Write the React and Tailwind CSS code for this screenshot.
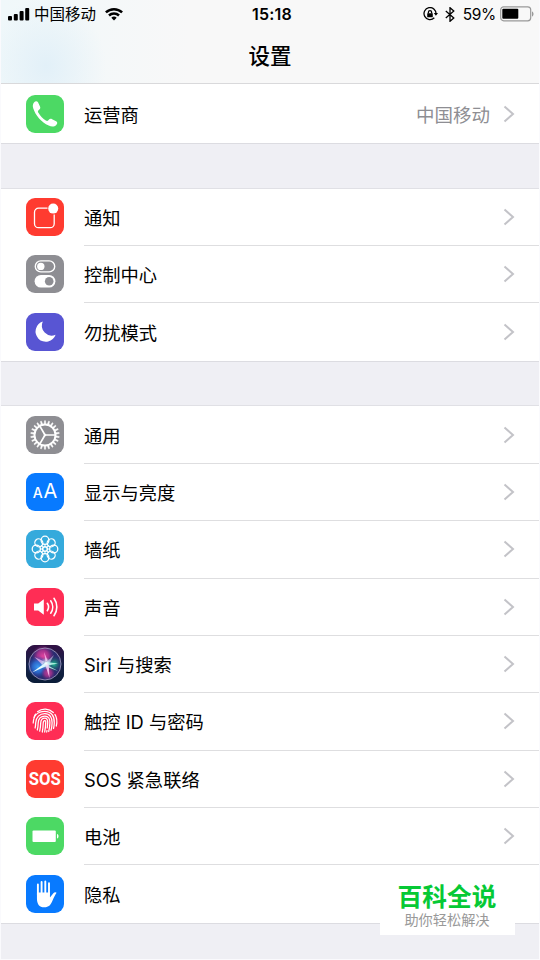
import React from 'react';

const teeth = Array.from({ length: 22 }, (_, i) => (i * 360) / 22);
const petals = Array.from({ length: 8 }, (_, i) => i * 45);

const PhoneIcon = () => (
  <svg viewBox="0 0 38 38" className="size-full">
    <path d="M8 7.600C9.200 6 11 5.800 12 7.300l2 4.300c.7 1.500.1 2.500-1.200 3.400-1.200.9-1.100 1.700-.2 3.100 1.900 3.100 4.200 5.600 7.200 7.500 1.200.7 1.900.5 2.800-.6 1-1.200 2-1.500 3.500-.8l4 2.100c1.600.9 1.500 2.300.2 3.600-2 2-4.700 2-7.600.7C15.300 27.300 9.600 20.500 7.300 13.500 6.500 11.100 6.700 9.200 8 7.600Z" fill="#fff" />
  </svg>
);

const NotificationIcon = () => (
  <svg viewBox="0 0 38 38" className="size-full">
    <path d="M21.500 10.200H12.500a4 4 0 0 0-4 4v11.500a4 4 0 0 0 4 4h11.700a4 4 0 0 0 4-4V16.500" fill="none" stroke="#fff" strokeWidth="1.300" />
    <circle cx="27.200" cy="10.600" r="5" fill="#fff" />
  </svg>
);

const ControlIcon = () => (
  <svg viewBox="0 0 38 38" className="size-full">
    <rect x="9.300" y="5.900" width="19.400" height="11" rx="5.500" fill="none" stroke="#fff" strokeWidth="1.400" />
    <circle cx="14.800" cy="11.400" r="3.700" fill="#fff" />
    <rect x="8.600" y="20" width="20.800" height="12.600" rx="6.300" fill="#fff" />
    <circle cx="23.200" cy="26.300" r="4.300" fill="#8e8e93" />
  </svg>
);

const MoonIcon = () => (
  <svg viewBox="0 0 38 38" className="size-full">
    <path d="M16.800 8.600A10.300 10.300 0 1 0 29.600 21.700 9.800 9.800 0 0 1 16.800 8.600Z" fill="#fff" />
  </svg>
);

const GearIcon = () => (
  <svg viewBox="0 0 38 38" className="size-full" fill="none" stroke="#fff">
    <circle cx="19" cy="19" r="10.500" strokeWidth="1.900" />
    {teeth.map((angle) => (
      <path key={angle} d="M18.200 8.500l.3-3.800h1l.3 3.800Z" fill="#fff" strokeWidth=".5" transform={`rotate(${angle} 19 19)`} />
    ))}
    <path d="M19 19H29M19 19l-5-8.700M19 19l-5 8.700" strokeWidth="1.700" />
    <circle cx="19" cy="19" r="1.300" fill="#fff" stroke="none" />
  </svg>
);

const DisplayIcon = () => (
  <div className="flex size-full items-baseline justify-center gap-[1px] font-['Inter',sans-serif] leading-[37px] text-white">
    <span className="text-[14px] leading-[37px] font-medium">A</span>
    <span className="text-[20px] leading-[37px]">A</span>
  </div>
);

const WallpaperIcon = () => (
  <svg viewBox="0 0 38 38" className="size-full" fill="none" stroke="#fff">
    {petals.map((angle) => (
      <ellipse key={angle} cx="19" cy="10.300" rx="3.900" ry="4.100" strokeWidth="1.300" transform={`rotate(${angle} 19 19)`} />
    ))}
    {petals.map((angle) => (
      <path key={angle} d="M19 16.500V13.800" strokeWidth="1" transform={`rotate(${angle} 19 19)`} />
    ))}
    <circle cx="19" cy="19" r="2.300" strokeWidth="1.500" />
  </svg>
);

const SoundIcon = () => (
  <svg viewBox="0 0 38 38" className="size-full" fill="none" stroke="#fff" strokeWidth="1.600" strokeLinecap="round">
    <path d="M8 15.500h4.200l5.600-4.300v15.600l-5.600-4.300H8Z" fill="#fff" stroke="none" />
    <path d="M21.300 15.300a6.500 6.500 0 0 1 0 7.400M24.700 12.800a10.600 10.600 0 0 1 0 12.400M28 10.300a14.800 14.800 0 0 1 0 17.400" />
  </svg>
);

const SiriIcon = () => (
  <svg viewBox="0 0 38 38" className="size-full">
    <defs>
      <linearGradient id="siriBg" x2="0" y2="1">
        <stop stopColor="#321044" />
        <stop offset=".5" stopColor="#172147" />
        <stop offset="1" stopColor="#0a1d38" />
      </linearGradient>
      <radialGradient id="pink"><stop stopColor="#e0449f" /><stop offset=".5" stopColor="#b83392" stopOpacity=".85" /><stop offset="1" stopColor="#8a2683" stopOpacity="0" /></radialGradient>
      <radialGradient id="blue"><stop stopColor="#3b9cf4" /><stop offset=".5" stopColor="#2b6fd6" stopOpacity=".85" /><stop offset="1" stopColor="#1b46a4" stopOpacity="0" /></radialGradient>
      <radialGradient id="green"><stop stopColor="#1fc193" /><stop offset="1" stopColor="#0e5b62" stopOpacity="0" /></radialGradient>
      <radialGradient id="glow"><stop stopColor="#fff" /><stop offset="1" stopColor="#9fe8ff" stopOpacity="0" /></radialGradient>
    </defs>
    <rect width="38" height="38" fill="url(#siriBg)" />
    <circle cx="19" cy="19" r="16" fill="#2b2c70" />
    <circle cx="17" cy="11" r="11" fill="url(#pink)" />
    <circle cx="12" cy="22" r="11" fill="url(#blue)" />
    <circle cx="28" cy="19" r="8" fill="url(#green)" />
    <circle cx="22" cy="28" r="7" fill="url(#pink)" opacity=".8" />
    <path d="M19.500 16.500L18 7l3.700 8.500Z" fill="#f7a2dd" />
    <path d="M20.500 17L28 10l-5 9Z" fill="#c6c2e8" opacity=".7" />
    <path d="M18 16.500L8.500 12 16.500 20Z" fill="#e3b3ee" opacity=".8" />
    <path d="M20 17.200L6 27.500 20.500 21Z" fill="#e6fbff" />
    <path d="M20 17L32 18.500 22 20.500 32 26 18.500 21Z" fill="#b6f4e4" opacity=".9" />
    <path d="M19 19L23.500 33 22.700 19Z" fill="#f3b6ea" />
    <circle cx="20" cy="18.500" r="6" fill="url(#glow)" />
    <circle cx="19" cy="19" r="16" fill="none" stroke="#a9a2c5" strokeWidth=".8" />
  </svg>
);

const TouchIcon = () => (
  <svg viewBox="0 0 38 38" className="size-full" fill="none" stroke="#fff" strokeWidth="1.250" strokeLinecap="round">
    <path d="M11.500 9.700a12 12 0 0 1 15.800.8M8 15.500a12 12 0 0 1 1.500-3.400M28.900 12.400C31 15.500 31.300 19.500 30.300 24" />
    <path d="M7.200 21c.2-7.200 4.500-11.700 11.500-11.700 6.600 0 10 5 9.600 11.700-.1 2-.3 3.700-.8 5.500" />
    <path d="M9.100 26c.5-2 .5-3.500.6-5.200.3-5.600 4-9.100 9.100-9.100 5 0 7.600 4 7.300 9.100-.1 2.900-.4 5.200-1.100 7.500" />
    <path d="M11.300 28c.6-2.300.8-4.300.9-7 .2-4.200 2.700-7 6.700-7 3.600 0 5.200 3 5 6.800-.1 3.300-.5 6-1.200 8.700" />
    <path d="M13.700 29.200c.6-2.600.9-5 1-8.100.1-3 1.400-4.900 4.100-4.900 2.100 0 3 1.700 2.900 4.300-.1 2-.2 3.800-.5 5.500" />
    <path d="M16.300 30c.6-2.700.8-5.600.9-8.800.1-1.600.6-2.600 1.600-2.600 1 0 1 .8.900 2.200-.1 3.200-.4 6.100-1 9.200M21 28.500l-.3 1.500" />
  </svg>
);

const SosIcon = () => (
  <div className="flex size-full items-center justify-center">
    <span className="scale-x-90 font-['Roboto',sans-serif] text-[18.500px] leading-6 font-bold text-white">SOS</span>
  </div>
);

const BatteryIcon = () => (
  <svg viewBox="0 0 38 38" className="size-full" fill="#fff">
    <rect x="6.500" y="13.500" width="23.300" height="11.500" rx="1" />
    <path d="M31 17c2 .4 2 4.100 0 4.500Z" />
  </svg>
);

const HandIcon = () => (
  <svg viewBox="0 0 38 38" className="size-full" fill="none" stroke="#fff" strokeWidth="1.900" strokeLinecap="round">
    <path d="M11.900 20V9.500M15.600 18V7M19.300 18V6.400M23 19V8.300" />
    <path d="M10.950 17.500h13v5l3.400-4.300c1.100-1.300 2.700-1.200 3.200-.4-1.500 2.200-2.800 5-4.100 8-1.800 4.400-3.800 6.500-8 6.500-5.500 0-7.500-3.500-7.500-8.800Z" fill="#fff" stroke="none" />
  </svg>
);

const groups = [
  [{ label: '运营商', value: '中国移动', color: 'bg-[#4cd964]', Icon: PhoneIcon }],
  [
    { label: '通知', color: 'bg-[#ff3b30]', Icon: NotificationIcon },
    { label: '控制中心', color: 'bg-[#8e8e93]', Icon: ControlIcon },
    { label: '勿扰模式', color: 'bg-[#5855d3]', Icon: MoonIcon },
  ],
  [
    { label: '通用', color: 'bg-[#8e8e93]', Icon: GearIcon },
    { label: '显示与亮度', color: 'bg-[#087aff]', Icon: DisplayIcon },
    { label: '墙纸', color: 'bg-[#35aadc]', Icon: WallpaperIcon },
    { label: '声音', color: 'bg-[#ff2d55]', Icon: SoundIcon },
    { label: 'Siri 与搜索', color: 'bg-[#172147]', Icon: SiriIcon },
    { label: '触控 ID 与密码', color: 'bg-[#ff2d55]', Icon: TouchIcon },
    { label: 'SOS 紧急联络', color: 'bg-[#ff3b30]', Icon: SosIcon },
    { label: '电池', color: 'bg-[#4cd964]', Icon: BatteryIcon },
    { label: '隐私', color: 'bg-[#087aff]', Icon: HandIcon },
  ],
];

const Row = ({ label, value, color, Icon, last }) => (
  <div className="flex h-[57.375px] items-stretch pl-[26px]">
    <div className={`mt-[9.200px] mr-[20px] size-[38px] shrink-0 overflow-hidden rounded-[9px] ${color}`}>
      <Icon />
    </div>
    <div className={`flex flex-1 items-center border-b pt-[2px] pr-[25px] ${last ? 'border-transparent' : 'border-[#dedee0]'}`}>
      <span className="flex-1 text-[18.300px] leading-6 whitespace-nowrap">{label}</span>
      {value && <span className="mr-[13px] text-[18.500px] leading-6 text-[#8e8e93]">{value}</span>}
      <svg viewBox="0 0 12 18" className="-mt-[2px] h-[18px] w-[12px]" fill="none" stroke="#c3c3c8" strokeWidth="2">
        <path d="M1.500 1.500L10 9l-8.500 7.500" />
      </svg>
    </div>
  </div>
);

const StatusBar = () => (
  <div className="grid h-7 grid-cols-3 items-center pr-[6px] pl-2 text-[15.500px] leading-5">
    <div className="flex items-center">
      <svg viewBox="0 0 22 14" className="mr-[4px] h-[14px] w-[22px]">
        <rect y="9" width="4" height="4.500" rx="1" />
        <rect x="5.800" y="7" width="4" height="6.500" rx="1" />
        <rect x="11.600" y="4" width="4" height="9.500" rx="1" />
        <rect x="17.200" y="1" width="4" height="12.500" rx="1" />
      </svg>
      <span className="pt-[2px] whitespace-nowrap">中国移动</span>
      <svg viewBox="0 0 18 14" className="ml-[9px] h-[14px] w-[18px]" fill="none" stroke="#000" strokeWidth="2.500">
        <path d="M.9 5.400a11.700 11.700 0 0 1 16.200 0M4 8.500a7.300 7.300 0 0 1 10 0" />
        <path d="M6.300 10.800a4 4 0 0 1 5.400 0L9 13.600Z" fill="#000" stroke="none" />
      </svg>
    </div>
    <div className="pl-[2px] text-center text-[16px] font-semibold tracking-[.2px]">15:18</div>
    <div className="flex items-center justify-end">
      <svg viewBox="0 0 15 14" className="h-[14px] w-[15px]" fill="none" stroke="#000" strokeWidth="1.300">
        <path d="M11.300 10.800A6 6 0 1 1 13 7.200" />
        <path d="M10.800 6h4.200l-2.100 2.800Z" fill="#000" stroke="none" />
        <path d="M5.400 6.500V5.200a1.600 1.600 0 0 1 3.200 0v1.300" />
        <rect x="4.200" y="6.200" width="5.600" height="4" rx=".5" fill="#000" stroke="none" />
      </svg>
      <svg viewBox="0 0 10 15" className="ml-[7px] h-[15px] w-[10px]" fill="none" stroke="#000" strokeWidth="1.300">
        <path d="M.8 4l8 7L5 14.300V.7L8.800 4l-8 7" />
      </svg>
      <span className="ml-[8px] pt-[1px] text-[15.500px] tracking-[-.3px]">59%</span>
      <svg viewBox="0 0 34 16" className="ml-[4px] h-[16px] w-[34px]">
        <rect x=".7" y=".8" width="30" height="14" rx="3" fill="none" stroke="#999" strokeWidth="1.200" />
        <rect x="2.300" y="2.800" width="16" height="10" rx="1" />
        <path d="M32 5.500c2 .5 2 4.500 0 5Z" fill="#999" />
      </svg>
    </div>
  </div>
);

const App = () => {
  return (
    <div className="relative h-[960px] w-[540px] overflow-hidden border-x-[1.500px] border-b border-[#fafafd] bg-[#efeff4] font-['Inter','Noto_Sans_CJK_SC',sans-serif] text-black">
      <div className="-mx-px">
        <header className="h-[84px] border-b border-[#d9d9db] bg-[#f8f8f8] bg-[radial-gradient(ellipse_60px_70px_at_46px_66px,#e2f0f8,transparent),linear-gradient(90deg,#f0f8fa,#f8f8f8_35%)]">
          <StatusBar />
          <h1 className="pt-[12px] text-center text-[21.500px] leading-8 font-medium">设置</h1>
        </header>
        <main className="flex flex-col gap-[45.700px]">
          {groups.map((rows, i) => (
            <section key={i} className={`bg-white ${i ? 'shadow-[0_-1px_#e0e0e5,0_1px_#dcdce1]' : 'pt-[1.500px] shadow-[0_1px_#dcdce1]'}`}>
              {rows.map((row, j) => (
                <Row key={row.label} {...row} last={j === rows.length - 1} />
              ))}
            </section>
          ))}
        </main>
      </div>
      <div className="absolute top-[880px] left-[378.500px] h-[55px] w-[135px] bg-white text-center">
        <div className="pt-[2px] text-[24.700px] leading-[31px] font-bold text-[#06c935]">百科全说</div>
        <div className="text-[14.200px] leading-[14px] text-[#999]">助你轻松解决</div>
      </div>
    </div>
  );
};

export default App;
